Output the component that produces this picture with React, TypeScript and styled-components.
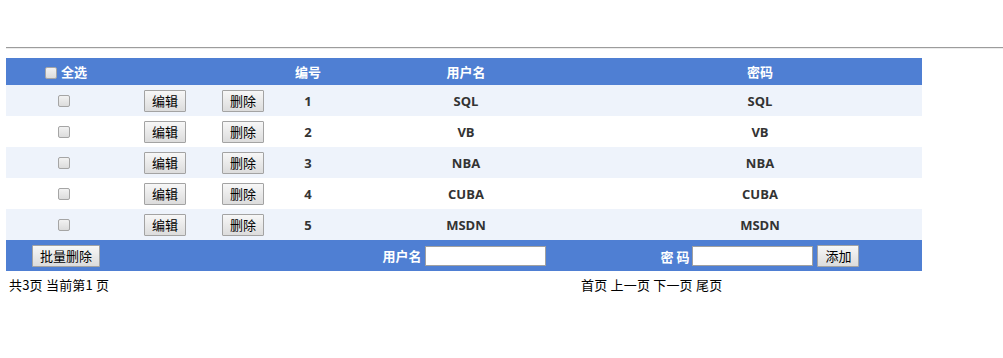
import styled, { createGlobalStyle } from "styled-components";

const Global = createGlobalStyle`
  body {
    margin: 0;
    background: #fff;
    font-family: "Noto Sans CJK SC", "Open Sans", sans-serif;
    font-size: 13px;
    color: #000;
  }
`;

const Page = styled.div`
  padding: 47px 0 0 6px;
`;

const Rule = styled.hr`
  margin: 0 0 9px 0;
  border: none;
  border-top: 1px solid #9c9c9c;
  border-bottom: 1px solid #ececec;
  height: 0;
`;

const Table = styled.table`
  width: 916px;
  border-collapse: collapse;
  table-layout: fixed;
  font-family: "Open Sans", "Noto Sans CJK SC", sans-serif;
  font-size: 13px;
  font-weight: 700;
  color: #333;
`;

const HeadRow = styled.tr`
  background: #4f7fd3;
  color: #fff;
  height: 27px;
`;

const Row = styled.tr<{ $alt?: boolean }>`
  background: ${(p) => (p.$alt ? "#eef3fb" : "#fff")};
  height: 31px;
`;

const FootRow = styled.tr`
  background: #4f7fd3;
  color: #fff;
  height: 31px;
`;

const Cell = styled.td`
  text-align: center;
  vertical-align: middle;
  padding: 0;
  white-space: nowrap;
`;

const HeadCell = styled.th`
  text-align: center;
  vertical-align: middle;
  padding: 0;
  font-weight: 700;
  white-space: nowrap;
`;

const Check = styled.input.attrs({ type: "checkbox" })`
  appearance: none;
  width: 12px;
  height: 12px;
  margin: 0 4px 0 0;
  border: 1px solid #a5a5a5;
  border-radius: 2px;
  background: linear-gradient(#f2f2f2, #dcdcdc);
  vertical-align: middle;
  position: relative;
  top: -1px;
`;

const Btn = styled.button`
  font-family: "Noto Sans CJK SC", sans-serif;
  font-size: 13px;
  color: #000;
  height: 22px;
  padding: 0 7px;
  border: 1px solid #a3a3a3;
  border-radius: 1px;
  background: linear-gradient(#f7f7f7, #dcdcdc);
  line-height: 18px;
  vertical-align: middle;
`;

const Field = styled.input`
  width: 117px;
  height: 16px;
  padding: 1px;
  border: 1px solid #a0a0a0;
  background: #fff;
  vertical-align: middle;
  margin: 0 4px 0 3px;
`;

const Label = styled.span`
  font-family: "Noto Sans CJK SC", sans-serif;
  font-weight: 700;
  vertical-align: middle;
`;

const Pager = styled.div`
  width: 916px;
  display: grid;
  grid-template-columns: 575px 1fr;
  padding-top: 4px;
  font-size: 13px;
`;

const PagerText = styled.span<{ $left?: boolean }>`
  padding-left: ${(p) => (p.$left ? "3px" : "0")};
  letter-spacing: 0.2px;
`;

const users = ["SQL", "VB", "NBA", "CUBA", "MSDN"];

export default function App() {
  return (
    <Page>
      <Global />
      <Rule />
      <Table>
        <colgroup>
          <col style={{ width: 120 }} />
          <col style={{ width: 78 }} />
          <col style={{ width: 78 }} />
          <col style={{ width: 52 }} />
          <col style={{ width: 264 }} />
          <col style={{ width: 324 }} />
        </colgroup>
        <thead>
          <HeadRow>
            <HeadCell>
              <Check />
              全选
            </HeadCell>
            <HeadCell />
            <HeadCell />
            <HeadCell>编号</HeadCell>
            <HeadCell>用户名</HeadCell>
            <HeadCell>密码</HeadCell>
          </HeadRow>
        </thead>
        <tbody>
          {users.map((u, i) => (
            <Row key={u} $alt={i % 2 === 0}>
              <Cell>
                <Check />
              </Cell>
              <Cell>
                <Btn>编辑</Btn>
              </Cell>
              <Cell>
                <Btn>删除</Btn>
              </Cell>
              <Cell>{i + 1}</Cell>
              <Cell>{u}</Cell>
              <Cell>{u}</Cell>
            </Row>
          ))}
          <FootRow>
            <Cell>
              <Btn>批量删除</Btn>
            </Cell>
            <Cell />
            <Cell />
            <Cell />
            <Cell>
              <Label>用户名</Label>
              <Field />
            </Cell>
            <Cell>
              <Label>密 码</Label>
              <Field />
              <Btn>添加</Btn>
            </Cell>
          </FootRow>
        </tbody>
      </Table>
      <Pager>
        <PagerText $left>共3页 当前第1 页</PagerText>
        <PagerText>首页 上一页 下一页 尾页</PagerText>
      </Pager>
    </Page>
  );
}
